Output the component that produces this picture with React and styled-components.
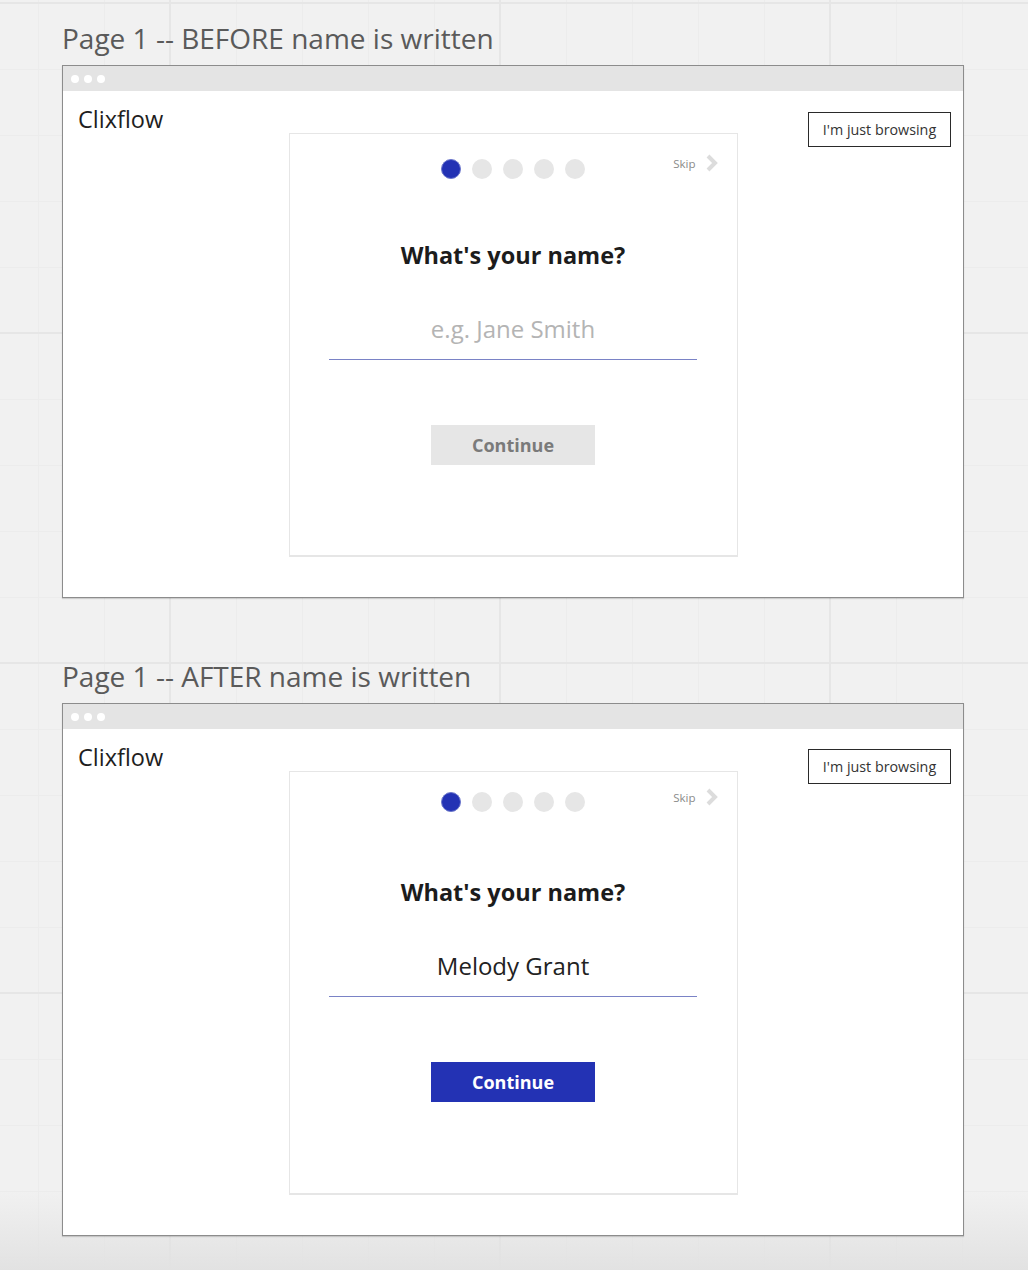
import React from "react";
import styled, { createGlobalStyle } from "styled-components";

const GlobalStyle = createGlobalStyle`
  html, body {
    margin: 0;
    padding: 0;
  }
  body {
    font-family: "Open Sans", "Noto Sans", sans-serif;
    background-color: #f1f1f1;
    background-image:
      linear-gradient(to bottom, rgba(241, 241, 241, 0) 1190px, rgba(226, 226, 226, 1) 1270px),
      linear-gradient(to right, #e6e6e6 2px, transparent 2px),
      linear-gradient(to bottom, #e6e6e6 2px, transparent 2px),
      linear-gradient(to right, #ececec 1px, transparent 1px),
      linear-gradient(to bottom, #ececec 1px, transparent 1px);
    background-size: 100% 1270px, 330px 330px, 330px 330px, 66px 66px, 66px 66px;
    background-position: 0 0, 169px 0, 0 2px, 38px 0, 0 3px;
    background-repeat: no-repeat, repeat, repeat, repeat, repeat;
  }
`;

const Page = styled.div`
  min-height: 1270px;
  padding: 19px 0 0 62px;
  box-sizing: border-box;
`;

const Section = styled.section`
  margin-bottom: 59px;
`;

const SectionTitle = styled.h2`
  margin: 0 0 8px;
  font-size: 28px;
  line-height: 38px;
  font-weight: 400;
  color: #5a5a5a;
`;

const Frame = styled.div`
  width: 902px;
  height: 533px;
  box-sizing: border-box;
  border: 1px solid #8c8c8c;
  background: #fff;
  box-shadow: 0 1px 1px rgba(0, 0, 0, 0.15);
  display: flex;
  flex-direction: column;
`;

const TitleBar = styled.div`
  height: 25px;
  flex: none;
  background: #e4e4e4;
  display: flex;
  align-items: center;
  gap: 5px;
  padding-left: 8px;
`;

const WinDot = styled.span`
  width: 8px;
  height: 8px;
  border-radius: 50%;
  background: #fff;
`;

const Content = styled.div`
  flex: 1;
  display: grid;
  grid-template-columns: 1fr 449px 1fr;
  align-items: start;
`;

const Logo = styled.div`
  padding: 14px 0 0 15px;
  font-size: 23.5px;
  line-height: 29px;
  color: #1e1e1e;
`;

const BrowseButton = styled.button`
  justify-self: end;
  margin: ${(p) => p.$top}px 12px 0 0;
  width: 143px;
  height: 35px;
  border: 1px solid #2a2a2a;
  background: #fff;
  font-family: "Open Sans", sans-serif;
  font-size: 14.3px;
  color: #333;
  padding: 0;
`;

const Card = styled.div`
  position: relative;
  margin-top: 42px;
  height: 424px;
  box-sizing: border-box;
  border: 1px solid #e6e6e6;
  border-bottom-width: 2px;
  display: flex;
  flex-direction: column;
  align-items: center;
  padding-top: ${(p) => p.$dotsTop}px;
`;

const Steps = styled.div`
  display: flex;
  gap: 11px;
  margin-left: -1px;
`;

const Step = styled.span`
  width: 20px;
  height: 20px;
  border-radius: 50%;
  box-sizing: border-box;
  background: ${(p) => (p.$active ? "#2332b4" : "#e6e6e6")};
  border: ${(p) => (p.$active ? "1px solid #6d78cc" : "none")};
`;

const Skip = styled.div`
  position: absolute;
  top: ${(p) => p.$top}px;
  right: 18px;
  display: flex;
  align-items: center;
  gap: 9px;
  font-size: 11.5px;
  color: #8a8a8a;
`;

const Heading = styled.h3`
  margin: ${(p) => p.$gap}px 0 0;
  font-size: 23.5px;
  line-height: 30px;
  font-weight: 700;
  color: #1c1c1c;
`;

const NameInput = styled.input`
  margin-top: 42px;
  width: 368px;
  box-sizing: content-box;
  padding: 0 0 13px;
  border: none;
  border-bottom: 1px solid #7a83c6;
  outline: none;
  background: transparent;
  text-align: center;
  font-family: "Open Sans", sans-serif;
  font-size: 24px;
  line-height: 34px;
  height: 34px;
  color: #222;

  &::placeholder {
    color: #b4b4b4;
  }
`;

const ContinueButton = styled.button`
  margin-top: 65px;
  width: 164px;
  height: 40px;
  border: none;
  padding: 0;
  font-family: "Open Sans", sans-serif;
  font-size: 18px;
  font-weight: 700;
  background: ${(p) => (p.$ready ? "#2332b4" : "#e6e6e6")};
  color: ${(p) => (p.$ready ? "#fff" : "#7a7a7a")};
`;

function Chevron() {
  return (
    <svg width="14" height="18" viewBox="0 0 14 18">
      <polyline
        points="3,2 10,9 3,16"
        fill="none"
        stroke="#dcdcdc"
        strokeWidth="4"
        strokeLinejoin="miter"
      />
    </svg>
  );
}

function Mockup({ title, name, dotsTop, skipTop, headingGap, browseTop }) {
  return (
    <Section>
      <SectionTitle>{title}</SectionTitle>
      <Frame>
        <TitleBar>
          <WinDot />
          <WinDot />
          <WinDot />
        </TitleBar>
        <Content>
          <Logo>Clixflow</Logo>
          <Card $dotsTop={dotsTop}>
            <Steps>
              {[0, 1, 2, 3, 4].map((i) => (
                <Step key={i} $active={i === 0} />
              ))}
            </Steps>
            <Skip $top={skipTop}>
              Skip
              <Chevron />
            </Skip>
            <Heading $gap={headingGap}>What's your name?</Heading>
            <NameInput
              placeholder="e.g. Jane Smith"
              defaultValue={name}
              readOnly
            />
            <ContinueButton $ready={!!name}>Continue</ContinueButton>
          </Card>
          <BrowseButton $top={browseTop}>I'm just browsing</BrowseButton>
        </Content>
      </Frame>
    </Section>
  );
}

export default function App() {
  return (
    <Page>
      <GlobalStyle />
      <Mockup
        title="Page 1 -- BEFORE name is written"
        name=""
        dotsTop={25}
        skipTop={20}
        headingGap={61}
        browseTop={21}
      />
      <Mockup
        title="Page 1 -- AFTER name is written"
        name="Melody Grant"
        dotsTop={20}
        skipTop={16}
        headingGap={65}
        browseTop={20}
      />
    </Page>
  );
}
